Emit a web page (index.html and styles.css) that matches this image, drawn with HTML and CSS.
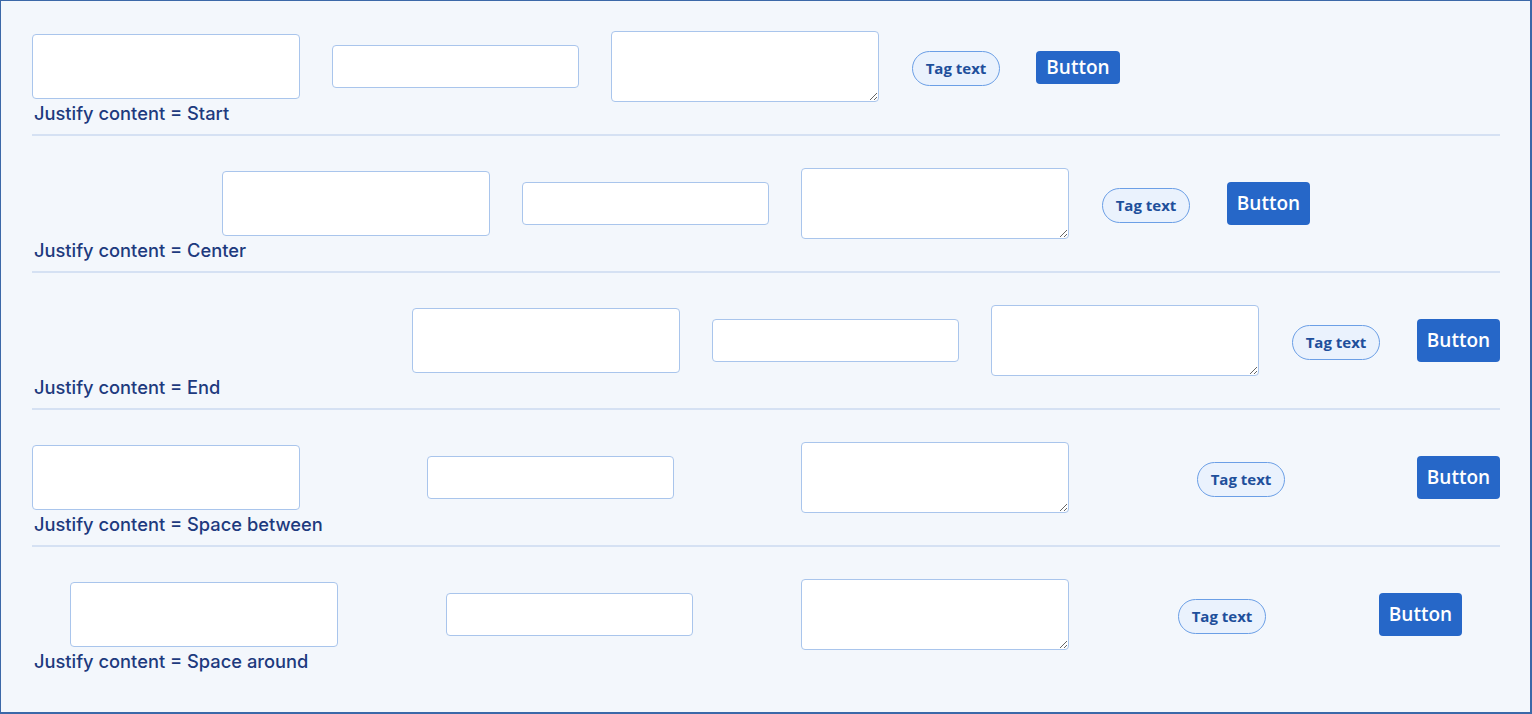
FILE: index.html
```html
<!DOCTYPE html>
<html lang="en">
<head>
<meta charset="utf-8">
<title>Justify content</title>
<link rel="stylesheet" href="styles.css">
</head>
<body>
<div class="page">
  <section class="demo demo--first">
    <div class="items items--start">
      <input class="field field--lg" type="text">
      <input class="field field--sm" type="text">
      <textarea class="area"></textarea>
      <span class="tag">Tag text</span>
      <button class="btn btn--compact">Button</button>
    </div>
    <div class="caption">Justify content = Start</div>
  </section>
  <section class="demo">
    <div class="items items--center">
      <input class="field field--lg" type="text">
      <input class="field field--sm" type="text">
      <textarea class="area"></textarea>
      <span class="tag">Tag text</span>
      <button class="btn">Button</button>
    </div>
    <div class="caption">Justify content = Center</div>
  </section>
  <section class="demo">
    <div class="items items--end">
      <input class="field field--lg" type="text">
      <input class="field field--sm" type="text">
      <textarea class="area"></textarea>
      <span class="tag">Tag text</span>
      <button class="btn">Button</button>
    </div>
    <div class="caption">Justify content = End</div>
  </section>
  <section class="demo">
    <div class="items items--between">
      <input class="field field--lg" type="text">
      <input class="field field--sm" type="text">
      <textarea class="area"></textarea>
      <span class="tag">Tag text</span>
      <button class="btn">Button</button>
    </div>
    <div class="caption">Justify content = Space between</div>
  </section>
  <section class="demo demo--last">
    <div class="items items--around">
      <input class="field field--lg" type="text">
      <input class="field field--sm" type="text">
      <textarea class="area"></textarea>
      <span class="tag">Tag text</span>
      <button class="btn">Button</button>
    </div>
    <div class="caption">Justify content = Space around</div>
  </section>
</div>
</body>
</html>
```

FILE: styles.css
```css
* { box-sizing: border-box; }

html, body {
  margin: 0;
  padding: 0;
}

body {
  background: #f3f7fc;
}

.page {
  width: 1532px;
  height: 714px;
  border: 1px solid #3b68a8;
  border-right-width: 2px;
  border-bottom-width: 2px;
  background: #f3f7fc;
  padding: 0 30px 0 31px;
  overflow: hidden;
}

.demo {
  padding: 32px 0 10px;
  border-bottom: 2px solid #d5e1f3;
}

.demo--first {
  padding-top: 30px;
}

.demo--last {
  border-bottom: none;
}

.items {
  display: flex;
  align-items: center;
  gap: 32px;
  height: 71px;
}

.items--start { justify-content: flex-start; }
.items--center { justify-content: center; }
.items--end { justify-content: flex-end; }
.items--between { justify-content: space-between; }
.items--around { justify-content: space-around; }

.field {
  flex: none;
  display: block;
  margin: 0;
  padding: 0 10px;
  background: #fff;
  border: 1px solid #a9c5ec;
  border-radius: 4px;
  font: 15px "Open Sans", sans-serif;
  outline: none;
}

.field--lg {
  width: 268px;
  height: 65px;
}

.field--sm {
  width: 247px;
  height: 43px;
}

.area {
  flex: none;
  display: block;
  width: 268px;
  height: 71px;
  margin: 0;
  padding: 6px 10px;
  background: #fff;
  border: 1px solid #a9c5ec;
  border-radius: 4px;
  font: 15px "Open Sans", sans-serif;
  outline: none;
}

.tag {
  flex: none;
  display: flex;
  align-items: center;
  justify-content: center;
  width: 88px;
  height: 35px;
  margin: 4px 0 0 1px;
  background: #eaf2fd;
  border: 1px solid #6b9fe6;
  border-radius: 18px;
  color: #1e4f9b;
  font: 700 15px/1 "Open Sans", sans-serif;
}

.btn {
  flex: none;
  width: 83px;
  height: 43px;
  margin: 0 0 0 5px;
  padding: 0;
  background: #2667c8;
  border: none;
  border-radius: 4px;
  color: #fff;
  font: 600 19px/1 "Open Sans", sans-serif;
}

.btn--compact {
  width: 84px;
  height: 33px;
  margin-top: 2px;
  margin-left: 4px;
}

.caption {
  margin-top: 1px;
  padding-left: 2px;
  height: 21px;
  color: #1d3a7e;
  font: 500 18.3px/20px "Inter", "Lato", sans-serif;
}
```
